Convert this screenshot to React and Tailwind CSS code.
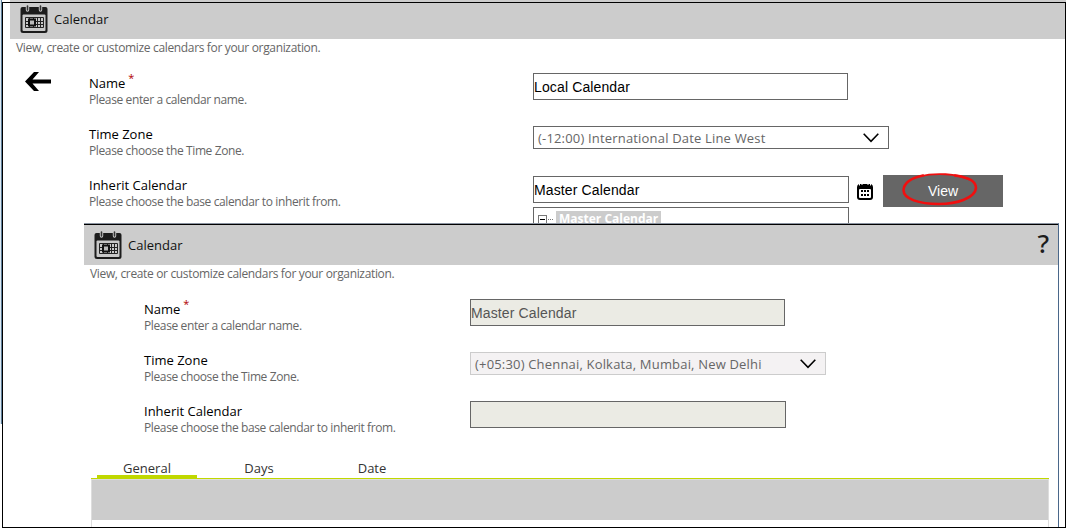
const SANS = "font-['Open_Sans','Noto_Sans',sans-serif]";
const ARIAL = "font-['Liberation_Sans',Arial,sans-serif]";

function HeaderIcon() {
  return (
    <svg width="28" height="28" viewBox="0 0 28 28" className="shrink-0">
      <path fill="#1c1c1c" d="M2.500 2H25.500Q27.500 2 27.500 4V25.500Q27.500 28 25 28H3Q.500 28 .500 25.500V4Q.500 2 2.500 2Z" />
      <rect x="2.500" y="9.500" width="23" height="16.500" rx="1" fill="#c8c8c8" />
      <path d="M7.500 1V5M20.500 1V5" stroke="#ccc" strokeWidth="3.400" strokeLinecap="round" />
      <path d="M7.500 1V5M20.500 1V5" stroke="#333" strokeWidth="1.600" strokeLinecap="round" />
      <path
        fill="none"
        stroke="#222"
        strokeWidth="1"
        d="M5.500 12.500H23.500M5.500 16.500H23.500M5.500 19.500H23.500M5.500 22.500H23.500M5.500 12.500V22.500M9.500 12.500V22.500M13.500 12.500V22.500M17.500 12.500V22.500M20.500 12.500V22.500M23.500 12.500V22.500"
      />
      <rect x="9" y="14.500" width="6" height="6" fill="#bbb" stroke="#111" strokeWidth="2" />
    </svg>
  );
}

function PickerIcon() {
  return (
    <svg width="16" height="17" viewBox="0 0 16 17" className="shrink-0">
      <path fill="#000" d="M2 1H14Q16 2 16 4V14Q16 17 13 17H3Q0 17 0 14V4Q0 2 2 1Z" />
      <rect x="2" y="6" width="12" height="9" rx="1" fill="#fff" />
      <path stroke="#fff" strokeWidth="1" d="M2.500 0V2.500M5 0V2M11 0V2M13.500 0V2.500" />
      <path
        fill="#000"
        d="M7 7h2v2H7zM10 7h2v2h-2zM4 7h2v2H4zM4 11h2v2H4zM7 11h2v2H7zM10 11h2v2h-2z"
      />
    </svg>
  );
}

function Chevron() {
  return (
    <svg width="16" height="10" viewBox="0 0 16 10" className="shrink-0">
      <path d="M.7.800L8 8.300L15.300.8" fill="none" stroke="#000" strokeWidth="1.600" />
    </svg>
  );
}

function Title() {
  return (
    <div className={`${SANS} text-[13px] leading-4 tracking-[0.03px] text-[#111]`}>Calendar</div>
  );
}

function Intro({ className }) {
  return (
    <p className={`${SANS} pt-px text-[12px] leading-4 tracking-[-0.34px] whitespace-nowrap text-[#666] ${className}`}>
      View, create or customize calendars for your organization.
    </p>
  );
}

function Row({ label, hint, required, labelWidth, children }) {
  return (
    <div className="flex h-[51px] items-start">
      <div className={`${SANS} shrink-0 pt-[2px] whitespace-nowrap ${labelWidth}`}>
        <div className="flex h-[17px] text-[13px] leading-[17px] text-black">
          <span>{label}</span>
          {required && <span className="-mt-[5px] ml-[3px] text-[11px] leading-4 text-[#b00000]">*</span>}
        </div>
        <div className="text-[12px] leading-4 tracking-[-0.38px] text-[#666]">{hint}</div>
      </div>
      {children}
    </div>
  );
}

function TextBox({ value, className }) {
  return (
    <div className={`${ARIAL} flex h-[27px] shrink-0 items-center border border-[#666] text-[14px] leading-4 tracking-[0.13px] ${className}`}>
      {value}
    </div>
  );
}

function Select({ value, className }) {
  return (
    <div
      className={`${SANS} mt-[2px] flex h-[23px] w-[356px] shrink-0 items-center justify-between border pr-[9px] pl-1 text-[13px] leading-4 tracking-[0.18px] whitespace-nowrap text-[#666] ${className}`}
    >
      <span>{value}</span>
      <Chevron />
    </div>
  );
}

function Tree() {
  return (
    <div className="mt-1 flex h-10 w-[316px] items-start border border-[#666] pt-[3px] pl-1">
      <svg width="17" height="14" viewBox="0 0 17 14" className="mt-1">
        <rect x=".5" y=".5" width="8" height="8" fill="#fff" stroke="#777" />
        <path d="M2 4.500H7" stroke="#000" />
        <path d="M10 4.500H16" stroke="#777" strokeDasharray="1 1" />
      </svg>
      <span className={`${SANS} ml-px bg-[#ccc] px-[3px] text-[12px] leading-4 font-bold whitespace-nowrap text-white`}>
        Master Calendar
      </span>
    </div>
  );
}

function Popup() {
  return (
    <section className="absolute top-[223px] left-[84px] flex h-[304px] w-[975px] flex-col overflow-hidden border-t border-r border-t-[#8a93a0] border-r-[#4a678a] bg-white">
      <header className="flex h-[41px] shrink-0 items-center border-t border-black bg-[#ccc] pr-[9px] pl-[10px]">
        <div className="pb-px">
          <HeaderIcon />
        </div>
        <div className="ml-[6px] grow pb-px">
          <Title />
        </div>
        <span className="pb-[5px] font-['Noto_Sans',sans-serif] text-[26px] leading-6 font-medium text-[#1c1c1c]">?</span>
      </header>
      <Intro className="pl-[6px]" />
      <div className="mt-[17px] pl-[60px]">
        <Row label="Name" hint="Please enter a calendar name." required labelWidth="w-[326px]">
          <TextBox value="Master Calendar" className="w-[315px] bg-[#ebebe4] text-[#555]" />
        </Row>
        <Row label="Time Zone" hint="Please choose the Time Zone." labelWidth="w-[326px]">
          <Select value="(+05:30) Chennai, Kolkata, Mumbai, New Delhi" className="border-[#ccc] bg-[#f4f2f3]" />
        </Row>
        <Row label="Inherit Calendar" hint="Please choose the base calendar to inherit from." labelWidth="w-[326px]">
          <TextBox value="" className="w-[316px] bg-[#ebebe4]" />
        </Row>
      </div>
      <div className="ml-[7px] w-[958px]">
        <nav className={`${SANS} flex h-[27px] items-end border-b border-[#c0d800] pl-[6px] text-[13px] leading-4 text-[#333]`}>
          <div className="h-[18px] w-[100px] border-b-[3px] border-[#c0d800] text-center">General</div>
          <div className="ml-[12px] h-[18px] w-[100px] text-center">Days</div>
          <div className="ml-[13px] h-[18px] w-[100px] text-center">Date</div>
        </nav>
        <div className="h-[49px] border-x border-[#ddd]">
          <div className="h-[41px] border-t border-[#ddd] bg-[#ccc]" />
        </div>
      </div>
    </section>
  );
}

export default function App() {
  return (
    <main className="relative h-[528px] w-[1066px] overflow-hidden bg-white">
      <header className="ml-[10px] flex h-[39px] items-center bg-[#ccc] pl-[10px]">
        <div className="pb-px">
          <HeaderIcon />
        </div>
        <div className="ml-[6px] pb-[2px]">
          <Title />
        </div>
      </header>
      <Intro className="pl-4" />
      <div className="mt-[17px] flex">
        <div className="w-[89px] pl-[25px]">
          <svg width="26" height="19" viewBox="0 0 26 19" className="mt-[-1px]">
            <path fill="#000" d="M0 9.500L9 0H14L7.500 7.600H26V11.400H7.500L14 19H9Z" />
          </svg>
        </div>
        <div>
          <Row label="Name" hint="Please enter a calendar name." required labelWidth="w-[444px]">
            <TextBox value="Local Calendar" className="w-[315px] text-black" />
          </Row>
          <Row label="Time Zone" hint="Please choose the Time Zone." labelWidth="w-[444px]">
            <Select value="(-12:00) International Date Line West" className="border-[#666] bg-white" />
          </Row>
          <Row label="Inherit Calendar" hint="Please choose the base calendar to inherit from." labelWidth="w-[444px]">
            <div className="pt-px">
              <TextBox value="Master Calendar" className="w-[316px] text-black" />
              <Tree />
            </div>
            <div className="pt-[8px] pl-2">
              <PickerIcon />
            </div>
            <div
              className={`${ARIAL} relative ml-[10px] flex h-8 w-[120px] items-center justify-center bg-[#666] text-[14px] leading-4 text-white`}
            >
              View
              <svg width="78" height="36" viewBox="0 0 78 36" className="absolute -top-[3px] left-[18px]">
                <path
                  fill="none"
                  stroke="#f00f0f"
                  strokeWidth="1.800"
                  strokeLinecap="round"
                  d="M18 4.500C34 .5 56 1.500 68 7.500"
                />
                <path
                  fill="none"
                  stroke="#f00f0f"
                  strokeWidth="2.600"
                  strokeLinecap="round"
                  d="M54 3.500C66 5 75 9 75 16C74 26 56 32 38 32C18 32 2.500 27 2.500 18C3 11 10 6 22 3.500"
                />
              </svg>
            </div>
          </Row>
        </div>
      </div>
      <Popup />
      <div className="pointer-events-none absolute top-0 left-0 h-[424px] w-[2px] border-l border-[#dce9f2] bg-[#5f7f9a]" />
      <div className="pointer-events-none absolute top-[2px] left-[2px] h-[526px] w-[1064px] border border-black" />
    </main>
  );
}
